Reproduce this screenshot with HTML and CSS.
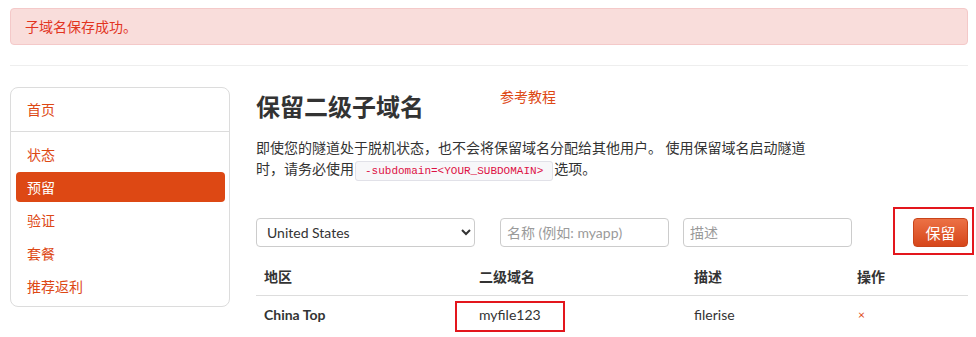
FILE: index.html
```html
<!DOCTYPE html>
<html lang="zh-CN">
<head>
<meta charset="utf-8">
<title>保留二级子域名</title>
<link rel="stylesheet" href="styles.css">
</head>
<body>
<div class="page">
  <div class="alert">子域名保存成功。</div>
  <div class="divider"></div>
  <div class="layout">
    <nav class="sidebar">
      <a class="nav-home" href="#">首页</a>
      <ul class="nav-list">
        <li><a href="#">状态</a></li>
        <li class="active"><a href="#">预留</a></li>
        <li><a href="#">验证</a></li>
        <li><a href="#">套餐</a></li>
        <li><a href="#">推荐返利</a></li>
      </ul>
    </nav>
    <main class="main">
      <div class="title-row">
        <h1 class="title">保留二级子域名</h1>
        <a class="tutorial" href="#">参考教程</a>
      </div>
      <p class="desc">即使您的隧道处于脱机状态，也不会将保留域名分配给其他用户。 使用保留域名启动隧道时，请务必使用<code class="code">-subdomain=&lt;YOUR_SUBDOMAIN&gt;</code>选项。</p>
      <form class="form-row">
        <select class="select">
          <option>United States</option>
          <option>China Top</option>
        </select>
        <input class="input input-name" type="text" placeholder="名称 (例如: myapp)">
        <input class="input input-desc" type="text" placeholder="描述">
        <button class="btn" type="button">保留</button>
      </form>
      <table class="table">
        <colgroup>
          <col class="c1"><col class="c2"><col class="c3"><col class="c4">
        </colgroup>
        <thead>
          <tr><th>地区</th><th>二级域名</th><th>描述</th><th>操作</th></tr>
        </thead>
        <tbody>
          <tr>
            <td class="region">China Top</td>
            <td><span class="marked">myfile123</span></td>
            <td>filerise</td>
            <td><a class="remove" href="#">×</a></td>
          </tr>
        </tbody>
      </table>
    </main>
  </div>
</div>
</body>
</html>
```
FILE: styles.css
```css
* { box-sizing: border-box; }
html, body { margin: 0; background: #fff; }
body {
  font-family: Lato, "Noto Sans CJK SC", sans-serif;
  font-size: 14px;
  color: #333;
}
a { text-decoration: none; }
.page { padding: 8px 8px 0 10px; width: 976px; }
.alert {
  background: #f9dddb;
  border: 1px solid #f4c9c9;
  border-radius: 4px;
  color: #e2341f;
  padding: 8px 14px;
  line-height: 19px;
}
.divider { height: 1px; background: #eeeeee; margin-top: 20px; }
.layout { display: flex; align-items: flex-start; margin-top: 21px; }
.sidebar {
  width: 220px;
  flex: none;
  border: 1px solid #dcdcdc;
  border-radius: 8px;
}
.nav-home {
  display: block;
  padding: 12px 16px 11px;
  line-height: 20px;
  color: #dd4814;
  border-bottom: 1px solid #dcdcdc;
}
.nav-list { list-style: none; margin: 0; padding: 7px 4px 5px 5px; }
.nav-list li { margin-bottom: 3px; }
.nav-list li:last-child { margin-bottom: 0; }
.nav-list a {
  display: block;
  height: 30px;
  line-height: 31px;
  padding-left: 11px;
  color: #dd4814;
  border-radius: 4px;
}
.nav-list .active a { background: #dd4814; color: #fff; }
.main { margin-left: 26px; width: 712px; }
.title-row { display: flex; align-items: flex-start; }
.title {
  margin: 0;
  font-size: 24px;
  line-height: 40px;
  font-weight: bold;
  color: #333;
}
.tutorial { margin-left: 76px; line-height: 20px; color: #dd4814; }
.desc { margin: 10px 0 0; line-height: 21px; height: 42px; max-width: 556px; }
.code {
  font-family: "Liberation Mono", monospace;
  font-size: 11px;
  line-height: 1;
  color: #dd1144;
  background: #f7f7f9;
  border: 1px solid #e1e1e8;
  border-radius: 3px;
  padding: 3px 9px;
  margin: 0 1px;
}
.form-row { display: flex; align-items: center; margin-top: 39px; height: 29px; }
.select {
  width: 219px;
  height: 29px;
  border: 1px solid #cccccc;
  border-radius: 4px;
  background: #fff;
  color: #333;
  font-family: Lato, "Noto Sans CJK SC", sans-serif;
  font-size: 14px;
  padding: 0 6px;
}
.input {
  width: 169px;
  height: 29px;
  border: 1px solid #cccccc;
  border-radius: 4px;
  padding: 0 6px;
  font-family: Lato, "Noto Sans CJK SC", sans-serif;
  font-size: 14px;
  color: #333;
}
.input::placeholder { color: #9a9a9a; }
.input-name { margin-left: 25px; }
.input-desc { margin-left: 14px; }
.btn {
  position: relative;
  margin-left: auto;
  width: 55px;
  height: 29px;
  border: 1px solid #c9441a;
  border-radius: 4px;
  background: linear-gradient(#ec7145, #d6461a);
  color: #fff;
  font-family: Lato, "Noto Sans CJK SC", sans-serif;
  font-size: 15px;
  padding: 0;
}
.btn::after {
  content: "";
  position: absolute;
  left: -21px;
  right: -7px;
  top: -12px;
  bottom: -9px;
  border: 2px solid #e3161d;
}
.table {
  margin-top: 11px;
  width: 712px;
  border-collapse: collapse;
  table-layout: fixed;
}
.c1 { width: 215px; }
.c2 { width: 215px; }
.c3 { width: 163px; }
.c4 { width: 119px; }
.table th {
  text-align: left;
  font-weight: bold;
  padding: 9px 8px 8px;
  line-height: 20px;
  border-bottom: 1px solid #dddddd;
}
.table td { padding: 8px; line-height: 20px; }
.region { font-weight: bold; }
.marked { position: relative; display: inline-block; }
.marked::after {
  content: "";
  position: absolute;
  left: -24px;
  right: -24px;
  top: -4px;
  bottom: -7px;
  border: 2px solid #e3161d;
}
.remove { color: #dd4814; font-size: 12px; margin-left: 1px; }
```
